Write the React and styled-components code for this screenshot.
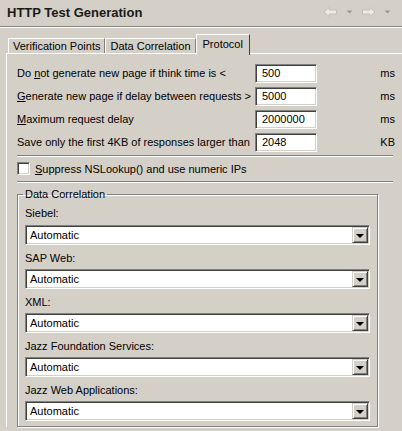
import React from "react";
import styled, { createGlobalStyle } from "styled-components";

const Global = createGlobalStyle`
  html, body { margin: 0; padding: 0; background: #d4d0c8; }
  * { box-sizing: border-box; }
`;

const Root = styled.div`
  width: 402px;
  height: 431px;
  overflow: hidden;
  background: #d4d0c8;
  font-family: "Liberation Sans", Arial, sans-serif;
  font-size: 11px;
  color: #000;
`;

const Header = styled.div`
  height: 27px;
  padding: 0 6px 2px 7px;
  display: flex;
  align-items: center;
  justify-content: space-between;
  border-bottom: 1px solid #8a877f;
  box-shadow: 0 1px 0 #fff;
`;

const Title = styled.div`
  font-weight: bold;
  font-size: 13px;
  color: #1a1a1a;
`;

const Nav = styled.div`
  display: flex;
  align-items: center;
  gap: 3px;
`;

const TabBar = styled.div`
  margin-top: 7px;
  padding-left: 8px;
  height: 19px;
  display: flex;
  align-items: flex-end;
`;

const Tab = styled.div`
  height: ${(p) => (p.$active ? "21px" : "15px")};
  margin-bottom: ${(p) => (p.$active ? "-2px" : "0")};
  padding: ${(p) => (p.$active ? "0 6px 3px 6px" : "0 4px 0 4px")};
  display: flex;
  align-items: center;
  background: #d4d0c8;
  border-top: 1px solid #fff;
  border-left: 1px solid #fff;
  border-right: 1px solid ${(p) => (p.$active ? "#404040" : "#808080")};
  position: relative;
  z-index: ${(p) => (p.$active ? 2 : 1)};
  white-space: nowrap;
`;

const Panel = styled.div`
  margin-left: 6px;
  border-top: 1px solid #fff;
  border-left: 1px solid #fff;
  padding: 9px 7px 0 10px;
  position: relative;
  z-index: 1;
`;

const FieldGrid = styled.div`
  display: grid;
  grid-template-columns: 238px 62px 1fr;
  grid-auto-rows: 20px;
  row-gap: 3px;
  align-items: center;
`;

const Label = styled.span`
  white-space: nowrap;
`;

const Unit = styled.span`
  justify-self: end;
`;

const TextInput = styled.div`
  height: 19px;
  background: #fff;
  border-top: 1px solid #808080;
  border-left: 1px solid #808080;
  border-bottom: 1px solid #fff;
  border-right: 1px solid #fff;
  box-shadow: inset 1px 1px 0 #404040, inset -1px -1px 0 #d4d0c8;
  padding-left: 6px;
  display: flex;
  align-items: center;
`;

const Sep = styled.div`
  margin-top: ${(p) => p.$mt || 0}px;
  margin-right: 2px;
  border-top: 1px solid #808080;
  border-bottom: 1px solid #fff;
`;

const CheckRow = styled.label`
  height: 24px;
  display: flex;
  align-items: center;
  gap: 5px;
  padding-bottom: 1px;
`;

const CheckBox = styled.span`
  width: 13px;
  height: 13px;
  background: #fff;
  border-top: 1px solid #808080;
  border-left: 1px solid #808080;
  border-bottom: 1px solid #fff;
  border-right: 1px solid #fff;
  box-shadow: inset 1px 1px 0 #404040, inset -1px -1px 0 #d4d0c8;
`;

const Group = styled.fieldset`
  margin: 5px 0 0 0;
  width: 361px;
  min-inline-size: 0;
  padding: 0 7px 5px 7px;
  border: 1px solid #808080;
  box-shadow: inset 1px 1px 0 #fff, 1px 1px 0 #fff;
`;

const Legend = styled.legend`
  padding: 0 2px;
  margin-left: -2px;
  font-size: 11px;
  line-height: 13px;
`;

const GroupLabel = styled.div`
  height: 24px;
  display: flex;
  align-items: center;
  padding-top: ${(p) => (p.$first ? "0" : "1px")};
`;

const Select = styled.div`
  height: 20px;
  background: #fff;
  border-top: 1px solid #808080;
  border-left: 1px solid #808080;
  border-bottom: 1px solid #fff;
  border-right: 1px solid #fff;
  box-shadow: inset 1px 1px 0 #404040, inset -1px -1px 0 #d4d0c8;
  padding: 1px 1px 1px 4px;
  display: flex;
  align-items: center;
  justify-content: space-between;
`;

const DropButton = styled.span`
  width: 16px;
  height: 16px;
  background: #d4d0c8;
  border-top: 1px solid #d4d0c8;
  border-left: 1px solid #d4d0c8;
  border-right: 1px solid #404040;
  border-bottom: 1px solid #404040;
  box-shadow: inset 1px 1px 0 #fff, inset -1px -1px 0 #808080;
  display: flex;
  align-items: center;
  justify-content: center;
  &::after {
    content: "";
    border-left: 4px solid transparent;
    border-right: 4px solid transparent;
    border-top: 4px solid #000;
    margin-top: 1px;
  }
`;

const ArrowLeft = () => (
  <svg width="15" height="12" viewBox="0 0 15 12">
    <path d="M1 6 L6 1.5 L6 4 L13.5 4 L13.5 8 L6 8 L6 10.5 Z" fill="#ecebe6" stroke="#c3bfb6" strokeWidth="1" strokeLinejoin="round" />
  </svg>
);

const ArrowRight = () => (
  <svg width="15" height="12" viewBox="0 0 15 12">
    <path d="M14 6 L9 1.5 L9 4 L1.5 4 L1.5 8 L9 8 L9 10.5 Z" fill="#ecebe6" stroke="#c3bfb6" strokeWidth="1" strokeLinejoin="round" />
  </svg>
);

const DownTri = () => (
  <svg width="9" height="6" viewBox="0 0 9 6" style={{ margin: "0 4px" }}>
    <path d="M1.5 1.5 L7.5 1.5 L4.5 4.5 Z" fill="#9a978f" />
  </svg>
);

const fields = [
  { label: <>Do <u>n</u>ot generate new page if think time is &lt;</>, value: "500", unit: "ms" },
  { label: <><u>G</u>enerate new page if delay between requests &gt;</>, value: "5000", unit: "ms" },
  { label: <><u>M</u>aximum request delay</>, value: "2000000", unit: "ms" },
  { label: <>Save only the first 4KB of responses larger than</>, value: "2048", unit: "KB" },
];

const selects = ["Siebel:", "SAP Web:", "XML:", "Jazz Foundation Services:", "Jazz Web Applications:"];

export default function App() {
  return (
    <Root>
      <Global />
      <Header>
        <Title>HTTP Test Generation</Title>
        <Nav>
          <ArrowLeft />
          <DownTri />
          <ArrowRight />
          <DownTri />
        </Nav>
      </Header>
      <TabBar>
        <Tab>Verification Points</Tab>
        <Tab>Data Correlation</Tab>
        <Tab $active>Protocol</Tab>
      </TabBar>
      <Panel>
        <FieldGrid>
          {fields.map((f, i) => (
            <React.Fragment key={i}>
              <Label>{f.label}</Label>
              <TextInput>{f.value}</TextInput>
              <Unit>{f.unit}</Unit>
            </React.Fragment>
          ))}
        </FieldGrid>
        <Sep $mt={3} />
        <CheckRow>
          <CheckBox />
          <span><u>S</u>uppress NSLookup() and use numeric IPs</span>
        </CheckRow>
        <Sep />
        <Group>
          <Legend>Data Correlation</Legend>
          {selects.map((s, i) => (
            <React.Fragment key={s}>
              <GroupLabel $first={i === 0}>{s}</GroupLabel>
              <Select>
                <span>Automatic</span>
                <DropButton />
              </Select>
            </React.Fragment>
          ))}
        </Group>
      </Panel>
    </Root>
  );
}
